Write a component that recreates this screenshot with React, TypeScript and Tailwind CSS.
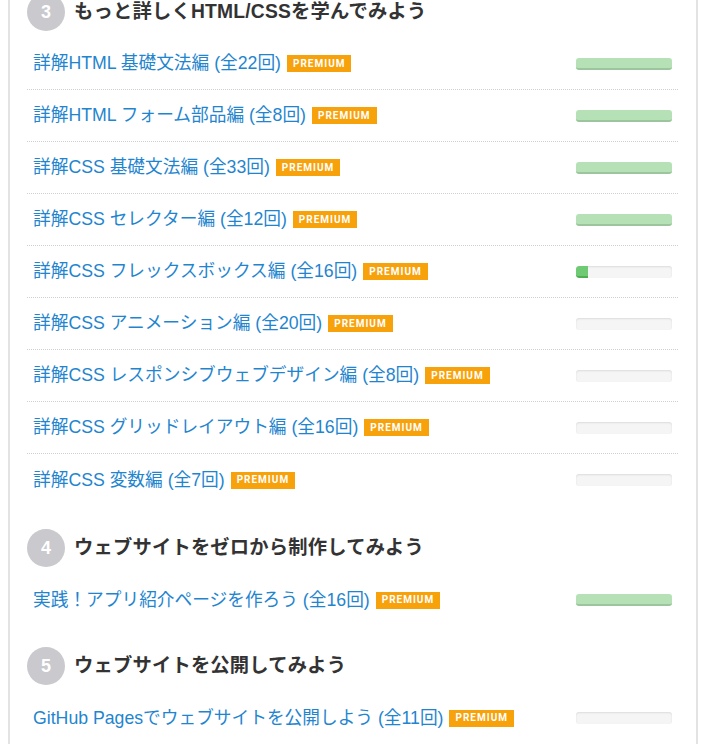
import React from "react";

type Course = { title: string; premium: boolean; progress: number };

const sections: { num: number; title: string; courses: Course[]; mt: string }[] = [
  {
    num: 3,
    title: "もっと詳しくHTML/CSSを学んでみよう",
    mt: "-mt-[7px]",
    courses: [
      { title: "詳解HTML 基礎文法編 (全22回)", premium: true, progress: 100 },
      { title: "詳解HTML フォーム部品編 (全8回)", premium: true, progress: 100 },
      { title: "詳解CSS 基礎文法編 (全33回)", premium: true, progress: 100 },
      { title: "詳解CSS セレクター編 (全12回)", premium: true, progress: 100 },
      { title: "詳解CSS フレックスボックス編 (全16回)", premium: true, progress: 12 },
      { title: "詳解CSS アニメーション編 (全20回)", premium: true, progress: 0 },
      { title: "詳解CSS レスポンシブウェブデザイン編 (全8回)", premium: true, progress: 0 },
      { title: "詳解CSS グリッドレイアウト編 (全16回)", premium: true, progress: 0 },
      { title: "詳解CSS 変数編 (全7回)", premium: true, progress: 0 },
    ],
  },
  {
    num: 4,
    title: "ウェブサイトをゼロから制作してみよう",
    mt: "mt-[23px]",
    courses: [{ title: "実践！アプリ紹介ページを作ろう (全16回)", premium: true, progress: 100 }],
  },
  {
    num: 5,
    title: "ウェブサイトを公開してみよう",
    mt: "mt-[21px]",
    courses: [{ title: "GitHub Pagesでウェブサイトを公開しよう (全11回)", premium: true, progress: 0 }],
  },
];

function Progress({ value }: { value: number }) {
  if (value >= 100) {
    return (
      <div className="w-[96px] h-[12px] rounded-[3px] bg-[#b6e1b7] border-b-2 border-[#9cc59d]" />
    );
  }
  return (
    <div className="w-[96px] h-[12px] rounded-[3px] bg-[#f5f5f5] shadow-[inset_0_1px_2px_rgba(0,0,0,0.1)] overflow-hidden">
      {value > 0 && (
        <div
          className="h-full bg-[#6fcb73] border-b-2 border-[#4caf50] rounded-l-[3px]"
          style={{ width: `${value}%` }}
        />
      )}
    </div>
  );
}

function Badge() {
  return (
    <span className="ml-[6px] inline-flex items-center h-[17px] px-[6px] bg-[#f7a10b] text-white text-[10px] font-bold tracking-[1px] leading-none font-['Roboto','Liberation_Sans',sans-serif]">
      PREMIUM
    </span>
  );
}

export default function App() {
  return (
    <div className="min-h-[745px] bg-white font-['Liberation_Sans','Noto_Sans_CJK_JP',sans-serif] overflow-hidden">
      <div className="ml-[8px] w-[690px] min-h-[745px] border-x-2 border-[#e3e3e3] pl-[17px] pr-[18px]">
        {sections.map((s) => (
          <div key={s.num} className={s.mt}>
            <div className="flex items-center gap-[9px] mb-[7px]">
              <div className="w-[38px] h-[38px] rounded-full bg-[#c9c9ce] text-white font-bold text-[18px] flex items-center justify-center">
                {s.num}
              </div>
              <h2 className="text-[19.3px] font-bold text-[#333] tracking-[0.2px]">{s.title}</h2>
            </div>
            <div>
              {s.courses.map((c, i) => (
                <div
                  key={i}
                  className={
                    "flex items-center h-[52px] pl-[6px] pr-[6px] " +
                    (i < s.courses.length - 1 ? "border-b border-dotted border-[#cfcfcf]" : "")
                  }
                >
                  <span className="text-[17.7px] text-[#1f85cf]">{c.title}</span>
                  {c.premium && <Badge />}
                  <div className="ml-auto">
                    <Progress value={c.progress} />
                  </div>
                </div>
              ))}
            </div>
          </div>
        ))}
      </div>
    </div>
  );
}
